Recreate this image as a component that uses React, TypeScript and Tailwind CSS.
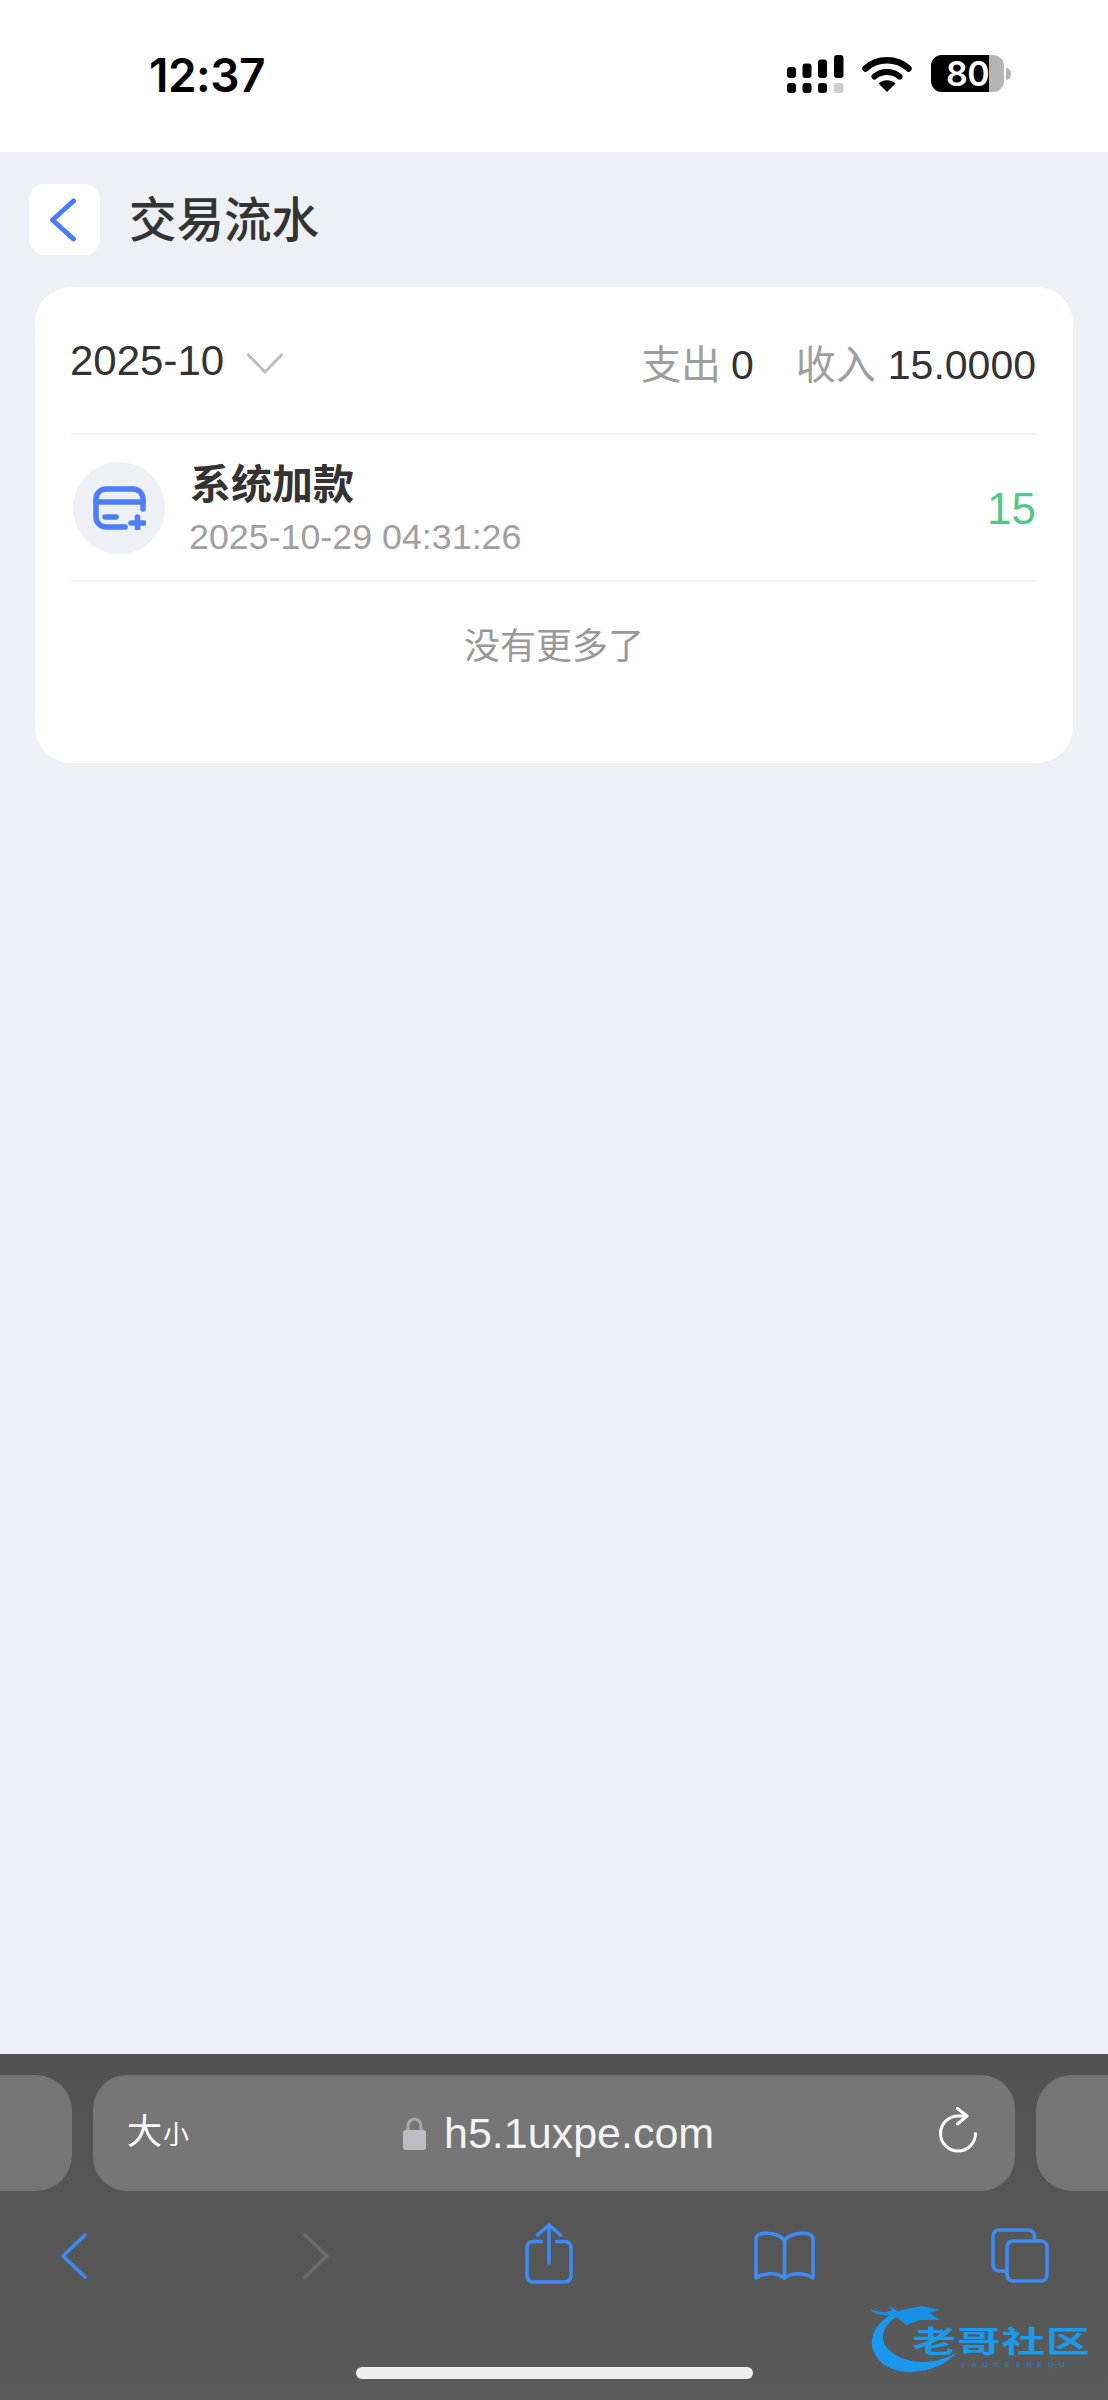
import React from 'react';

const FONT = 'font-["Liberation_Sans","Noto_Sans_CJK_SC",sans-serif]';

const SignalIcon = () => (
  <svg width="63" height="38" viewBox="0 0 63 38" className="block">
    <rect x="0" y="12" width="9" height="11" rx="3" fill="#000" />
    <rect x="15.5" y="8.5" width="9" height="14.5" rx="3" fill="#000" />
    <rect x="31" y="4.5" width="9" height="18.5" rx="3" fill="#000" />
    <rect x="47" y="0" width="9.5" height="23" rx="3" fill="#000" />
    <rect x="0" y="28" width="9" height="10" rx="3" fill="#000" />
    <rect x="15.5" y="28" width="9" height="10" rx="3" fill="#000" />
    <rect x="31" y="28" width="9" height="10" rx="3" fill="#000" />
    <rect x="47" y="28" width="9.5" height="10" rx="2" fill="#cccccc" />
  </svg>
);

const WifiIcon = () => (
  <svg width="50" height="37" viewBox="0 0 50 37" className="block">
    <path d="M3.5 13.5C15.5 2.5 34.5 2.5 46.5 13.5" fill="none" stroke="#000" strokeWidth="6.5" strokeLinecap="round" />
    <path d="M12.5 21.5C19.5 15.5 30.5 15.5 37.5 21.5" fill="none" stroke="#000" strokeWidth="6" strokeLinecap="round" />
    <path d="M16.5 28.5C21.5 24.2 28.5 24.2 33.5 28.5L25 37Z" fill="#000" />
  </svg>
);

const BackChevron = () => (
  <svg width="28" height="44" viewBox="0 0 28 44" className="block">
    <path d="M24.5 3L3.5 22L24.5 41" fill="none" stroke="#4a7cf7" strokeWidth="5" strokeLinecap="round" strokeLinejoin="round" />
  </svg>
);

const CardPlusIcon = () => (
  <svg width="53" height="44" viewBox="0 0 53 44" className="block">
    <g fill="none" stroke="#4c7dfa" strokeWidth="5.5" strokeLinecap="round" strokeLinejoin="round">
      <path d="M50 23V13A10 10 0 0 0 40 3H13A10 10 0 0 0 3 13V31A10 10 0 0 0 13 41H32" />
      <path d="M3 16H50" />
      <path d="M12 31H23" />
      <path d="M38 37H51" />
      <path d="M44.5 31V43" />
    </g>
  </svg>
);

const LockIcon = () => (
  <svg width="23" height="33" viewBox="0 0 23 33" className="block">
    <path d="M5 15V9.5C5 5.5 7.5 2 11.5 2S18 5.5 18 9.5V15" fill="none" stroke="#a9a8ae" strokeWidth="3" />
    <rect x="0" y="13" width="23" height="20" rx="3" fill="#bdbcc2" />
  </svg>
);

const ReloadIcon = () => (
  <svg width="38" height="46" viewBox="0 0 38 46" className="block">
    <g fill="none" stroke="#ffffff" strokeWidth="3" strokeLinecap="round" strokeLinejoin="round">
      <path d="M27 9H19A17.5 17.5 0 1 0 36.5 26.5" />
      <path d="M18.5 1.5L28 9L18.5 17" />
    </g>
  </svg>
);

const ToolChevron = ({ color, flip }: { color: string; flip?: boolean }) => (
  <svg width="26" height="46" viewBox="0 0 26 46" className="block">
    <path
      d={flip ? 'M2 2L24 23L2 44' : 'M24 2L2 23L24 44'}
      fill="none"
      stroke={color}
      strokeWidth="3.6"
      strokeLinecap="round"
      strokeLinejoin="round"
    />
  </svg>
);

const ShareIcon = () => (
  <svg width="48" height="61" viewBox="0 0 48 61" className="block">
    <g fill="none" stroke="#3e8bf5" strokeWidth="3.6" strokeLinecap="round" strokeLinejoin="round">
      <path d="M16.5 18.5H8A6 6 0 0 0 2 24.5V53A6 6 0 0 0 8 59H40A6 6 0 0 0 46 53V24.5A6 6 0 0 0 40 18.5H31.5" />
      <path d="M24 2V40" />
      <path d="M12.5 12L24 2L35.5 12" />
    </g>
  </svg>
);

const BookIcon = () => (
  <svg width="61" height="49" viewBox="0 0 61 49" className="block">
    <g fill="none" stroke="#3e8bf5" strokeWidth="3.6" strokeLinecap="round" strokeLinejoin="round">
      <path d="M30.5 9C25 3.5 17 1.5 8 2.5C4.5 3 2 5 2 8.5V47C10 41.5 23 41 30.5 47C38 41 51 41.5 59 47V8.5C59 5 56.5 3 53 2.5C44 1.5 36 3.5 30.5 9Z" />
      <path d="M30.5 9V47" />
    </g>
  </svg>
);

const TabsIcon = () => (
  <svg width="58" height="55" viewBox="0 0 58 55" className="block">
    <g fill="none" stroke="#3e8bf5" strokeWidth="3.6" strokeLinecap="round" strokeLinejoin="round">
      <path d="M43.5 13V8A6 6 0 0 0 37.5 2H8A6 6 0 0 0 2 8V37A6 6 0 0 0 8 43H15" />
      <rect x="16" y="13" width="40" height="40" rx="6" />
    </g>
  </svg>
);

// dragon from the forum watermark, traced by eye
const DragonMark = () => (
  <svg width="110" height="90" viewBox="0 0 110 90" className="block blur-[0.5px]">
    <path d="M40 25C25 35 21 45 22 55C24 72 42 83 62 82C80 81 98 74 107 62C95 70 78 74 62 71C46 68 33 58 33 47C33 38 40 30 50 25Z" fill="#1a97ee" />
    <path d="M20 19C30 23 38 23 42 20L38 15L48 21C55 19 62 18 72 16L90 20L80 23L90 30L70 30L56 35L48 28L40 25C32 26 24 24 20 19Z" fill="#1a8fe6" />
  </svg>
);

export default function App() {
  return (
    <div className={`${FONT} flex h-[2400px] w-[1108px] flex-col overflow-hidden bg-[#edf0f5]`}>
      {/* ios status bar */}
      <div className="flex h-[152px] items-start bg-white">
        <div className='ml-[149px] mt-[48px] font-["Inter",sans-serif] text-[46px] font-semibold leading-[54px] tracking-[-0.5px] text-black'>12:37</div>
        <div className="ml-auto mr-[97px] mt-[55px] flex items-start">
          <SignalIcon />
          <div className="ml-[12px]">
            <WifiIcon />
          </div>
          <div className="ml-[19px] flex items-center">
            <div className="relative h-[37px] w-[73px]">
              <div className="h-full w-full overflow-hidden rounded-[11px] bg-[#b5b5b5]">
                <div className="h-full w-[58px] bg-black" />
              </div>
              <div className='absolute left-[15px] top-0 font-["Inter",sans-serif] text-[34px] font-semibold leading-[37px] tracking-[-0.5px] text-white'>80</div>
            </div>
            <div className="ml-[2px] h-[12px] w-[5px] rounded-r-full bg-[#b5b5b5]" />
          </div>
        </div>
      </div>

      {/* page header */}
      <div className="ml-[29px] mt-[32px] flex items-center">
        <div className="flex h-[71px] w-[71px] items-center justify-center rounded-[16px] bg-white pr-[3px]">
          <BackChevron />
        </div>
        <div className="ml-[29px] mt-[2px] text-[47.5px] font-medium leading-[60px] text-[#333333]">交易流水</div>
      </div>

      {/* card */}
      <div className="mx-[35px] mt-[32px] h-[476px] rounded-[36px] bg-white px-[36px]">
        <div className="flex h-[148px] items-center border-b-2 border-[#f6f6f6] pr-[1px]">
          <span className="-ml-[1px] mt-[2px] text-[42px] leading-[50px] text-[#333333]">2025-10</span>
          <svg width="38" height="22" viewBox="0 0 38 22" className="ml-[22px] mt-[6px] block">
            <path d="M1.5 2L19 20L36.5 2" fill="none" stroke="#bdbdbd" strokeWidth="3" />
          </svg>
          <div className="ml-auto mt-[9px] flex items-center text-[41px] leading-[50px] text-[#333333]">
            <span className="text-[40px] text-[#9e9e9e]">支出</span>
            <span className="ml-[10px]">0</span>
            <span className="ml-[42px] text-[40px] text-[#9e9e9e]">收入</span>
            <span className="ml-[12px]">15.0000</span>
          </div>
        </div>
        <div className="flex h-[147px] items-center border-b-2 border-[#f6f6f6] pr-[1px]">
          <div className="ml-[2px] flex h-[92px] w-[92px] items-center justify-center rounded-full bg-[#edf0f5]">
            <CardPlusIcon />
          </div>
          <div className="ml-[25px] mt-[5px] flex flex-col">
            <span className="text-[41px] font-bold leading-[46px] text-[#333333]">系统加款</span>
            <span className="-ml-[1px] mt-[8px] text-[35.8px] leading-[42px] text-[#a0a0a0]">2025-10-29 04:31:26</span>
          </div>
          <span className="ml-auto mt-[3px] text-[44px] leading-[50px] text-[#52c78b]">15</span>
        </div>
        <div className="pt-[42px] text-center text-[36px] leading-[46px] text-[#999999]">没有更多了</div>
      </div>

      {/* safari bottom bar */}
      <div className="relative mt-auto h-[346px] bg-gradient-to-b from-[#525252] to-[#5a5a5a] pt-[21px]">
        <div className="flex h-[116px] gap-[21px]">
          <div className="w-[72px] rounded-r-[36px] bg-[#757575]" />
          <div className="relative flex w-[922px] items-center rounded-[34px] bg-[#767676] pl-[34px] pr-[38px]">
            <div className="flex items-baseline text-white">
              <span className="text-[35px] leading-[44px]">大</span>
              <span className="ml-[1px] text-[26px] leading-[44px]">小</span>
            </div>
            <div className="ml-[214px] flex items-center">
              <LockIcon />
              <span className="ml-[18px] text-[43px] leading-[50px] text-[#f4f4f4]">h5.1uxpe.com</span>
            </div>
            <div className="ml-auto -mt-[6px]">
              <ReloadIcon />
            </div>
          </div>
          <div className="flex-1 rounded-l-[36px] bg-[#757575]" />
        </div>
        <div className="ml-[61px] mt-[32px] flex h-[61px] items-start">
          <div className="mt-[10px]">
            <ToolChevron color="#3e8bf5" />
          </div>
          <div className="ml-[216px] mt-[10px]">
            <ToolChevron color="#6d6d6d" flip />
          </div>
          <div className="ml-[196px]">
            <ShareIcon />
          </div>
          <div className="ml-[181px] mt-[8px]">
            <BookIcon />
          </div>
          <div className="ml-[176px] mt-[5px]">
            <TabsIcon />
          </div>
        </div>
        <div className="ml-[356px] mt-[83px] h-[12px] w-[397px] rounded-full bg-[#eeeeee]" />

        {/* watermark sits over the bar */}
        <div className="absolute left-[850px] top-[236px]">
          <DragonMark />
        </div>
        <div className="absolute left-[912px] top-[274px] h-[27px] origin-top scale-y-[0.68] whitespace-nowrap text-[44px] font-bold leading-[40px] tracking-[0.5px] text-[#1a9bf0]">
          老哥社区
        </div>
        <div className="absolute left-[962px] top-[307px] whitespace-nowrap text-[7px] leading-[7px] tracking-[6px] text-[#1c7fcc]">
          LAUGESHEQU
        </div>
      </div>
    </div>
  );
}
